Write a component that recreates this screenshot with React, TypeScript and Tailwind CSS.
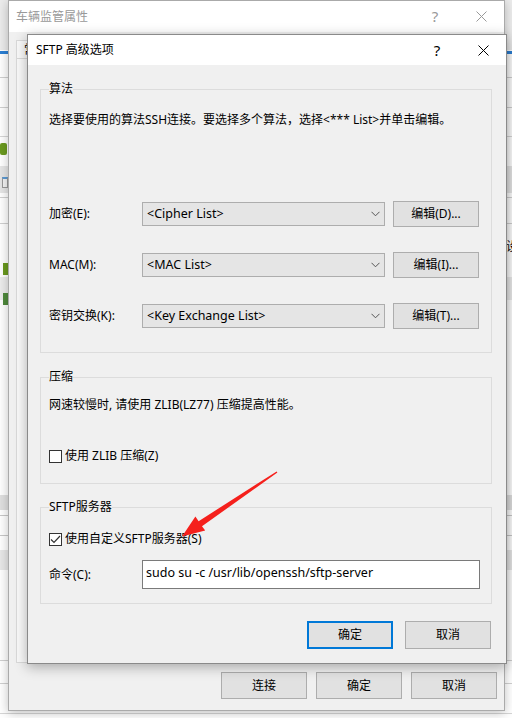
import type { ReactNode } from "react";

function CloseGlyph({ color }: { color: string }) {
  return (
    <svg width="11" height="11" viewBox="0 0 11 11">
      <path d="M0.5 0.5 L10.5 10.5 M10.5 0.5 L0.5 10.5" stroke={color} strokeWidth="1" fill="none" />
    </svg>
  );
}

function Chevron() {
  return (
    <svg width="9" height="6" viewBox="0 0 9 6">
      <path d="M0.5 0.8 L4.5 4.8 L8.5 0.8" stroke="#555" strokeWidth="1" fill="none" />
    </svg>
  );
}

function TitleButtons({ color }: { color: string }) {
  return (
    <div className="flex h-full">
      <div className="flex w-[46px] items-center justify-center text-[15px]" style={{ color }}>
        ?
      </div>
      <div className="flex w-[46px] items-center justify-center">
        <CloseGlyph color={color} />
      </div>
    </div>
  );
}

function WinButton({ children, primary, className = "" }: { children: ReactNode; primary?: boolean; className?: string }) {
  return (
    <button
      className={
        "flex w-[86px] items-center justify-center bg-[#e1e1e1] text-[12px] text-black " +
        (primary ? "border-2 border-[#0078d7] " : "border border-[#adadad] ") +
        className
      }
    >
      {children}
    </button>
  );
}

function Combo({ value }: { value: string }) {
  return (
    <div className="flex h-[24px] w-[243px] items-center justify-between border border-[#adadad] bg-[#e5e5e5] pl-[4px] pr-[4px] text-[12.5px]">
      <span>{value}</span>
      <Chevron />
    </div>
  );
}

function Checkbox({ checked }: { checked?: boolean }) {
  return (
    <span className="flex h-[13px] w-[13px] items-center justify-center border border-[#333] bg-white">
      {checked && (
        <svg width="11" height="11" viewBox="0 0 11 11">
          <path d="M1 5.5 L4 8.5 L10 2" stroke="#333" strokeWidth="1.2" fill="none" />
        </svg>
      )}
    </span>
  );
}

function Group({ title, height, children }: { title: string; height: string; children: ReactNode }) {
  return (
    <fieldset className={"w-[452px] border border-[#dcdcdc] px-[8px] " + height}>
      <legend className="px-0 leading-[16px]">{title}</legend>
      {children}
    </fieldset>
  );
}

const algos = [
  { label: "加密(E):", value: "<Cipher List>", button: "编辑(D)..." },
  { label: "MAC(M):", value: "<MAC List>", button: "编辑(I)..." },
  { label: "密钥交换(K):", value: "<Key Exchange List>", button: "编辑(T)..." },
];

// strips of the app window that shows behind both dialogs
const backdrop = [
  { top: 0, h: 50, cls: "bg-[#ececec]" },
  { top: 51, h: 3, cls: "bg-[#2b7fd4]" },
  { top: 77, h: 1, cls: "bg-[#d0d0d0]" },
  { top: 107, h: 1, cls: "bg-[#d0d0d0]" },
  { top: 136, h: 1, cls: "bg-[#d6d6d6]" },
  { top: 166, h: 27, cls: "bg-[#e6e6e6]" },
  { top: 197, h: 1, cls: "bg-[#d0d0d0]" },
  { top: 223, h: 1, cls: "bg-[#d0d0d0]" },
  { top: 277, h: 23, cls: "bg-[#ececec]" },
  { top: 495, h: 15, cls: "bg-[#e0e0e0]" },
  { top: 515, h: 1, cls: "bg-[#c8c8c8]" },
  { top: 535, h: 1, cls: "bg-[#c8c8c8]" },
  { top: 550, h: 20, cls: "bg-[#e8e8e8]" },
  { top: 660, h: 1, cls: "bg-[#d0d0d0]" },
  { top: 683, h: 1, cls: "bg-[#d0d0d0]" },
  { top: 713, h: 1, cls: "bg-[#d6d6d6]" },
];

export default function App() {
  return (
    <div className="relative h-[718px] w-[512px] overflow-hidden bg-white font-['Noto_Sans','Noto_Sans_CJK_SC',sans-serif] text-[12px] text-black">
      {backdrop.map((s) => (
        <div key={s.top} className={"absolute left-0 w-full " + s.cls} style={{ top: s.top, height: s.h }} />
      ))}
      <div className="absolute left-0 top-[143px] h-[12px] w-[7px] rounded-[2px] bg-[#6a9a1f]" />
      <div className="absolute left-[2px] top-[177px] h-[11px] w-[6px] border border-[#999] border-t-2 border-t-[#5b9bd5] bg-[#f4f4f4]" />
      <div className="absolute left-[12px] top-[201px] text-[12px] leading-[16px]">户</div>
      <div className="absolute left-[3px] top-[263px] h-[12px] w-[5px] bg-[#6a9a1f]" />
      <div className="absolute left-[3px] top-[293px] h-[12px] w-[5px] bg-[#4f8a3c]" />
      <div className="absolute left-[506px] top-[239px] text-[12px] leading-[16px]">设</div>

      {/* parent dialog */}
      <div className="absolute left-[8px] top-0 flex h-[711px] w-[497px] flex-col border border-[#aaaaaa] bg-[#f0f0f0] shadow-[0_2px_10px_rgba(0,0,0,0.25)]">
        <div className="flex h-[31px] shrink-0 items-center justify-between bg-white pl-[7px]">
          <span className="text-[#999]">车辆监管属性</span>
          <TitleButtons color="#999" />
        </div>
        <div className="flex flex-1 flex-col px-[7px] pt-[8px]">
          <div className="flex h-[18px] w-[11px] items-center overflow-hidden whitespace-nowrap border border-b-0 border-r-0 border-[#d9d9d9] bg-[#f9f9f9] pl-[7px] leading-[16px]">
            常规
          </div>
          <div className="h-[605px] w-full border border-[#d9d9d9] bg-[#f9f9f9]" />
          <div className="mt-[9px] flex justify-end gap-[9px]">
            <WinButton className="h-[27px]">连接</WinButton>
            <WinButton className="h-[27px]">确定</WinButton>
            <WinButton className="h-[27px]">取消</WinButton>
          </div>
        </div>
      </div>

      {/* SFTP dialog */}
      <div className="absolute left-[27px] top-[34px] flex h-[630px] w-[480px] flex-col border border-[#8a8a8a] bg-[#f0f0f0] shadow-[0_3px_12px_rgba(0,0,0,0.3)]">
        <div className="flex h-[30px] shrink-0 items-center justify-between bg-white pl-[8px]">
          <span>SFTP 高级选项</span>
          <TitleButtons color="#000" />
        </div>
        <div className="flex flex-col pl-[12px] pt-[16px]">
          <Group title="算法" height="h-[272px]">
            <p className="mt-[15px] leading-[16px]">
              选择要使用的算法SSH连接。要选择多个算法，选择&lt;*** List&gt;并单击编辑。
            </p>
            <div className="mt-[73px] flex flex-col gap-[25px]">
              {algos.map((a) => (
                <div key={a.label} className="flex h-[26px] items-center">
                  <span className="w-[93px]">{a.label}</span>
                  <Combo value={a.value} />
                  <WinButton className="ml-[8px] h-[26px]">{a.button}</WinButton>
                </div>
              ))}
            </div>
          </Group>

          <div className="mt-[16px]">
            <Group title="压缩" height="h-[115px]">
              <p className="mt-[12px] leading-[16px]">网速较慢时, 请使用 ZLIB(LZ77) 压缩提高性能。</p>
              <label className="mt-[35px] flex h-[16px] items-center gap-[3px]">
                <Checkbox />
                <span>使用 ZLIB 压缩(Z)</span>
              </label>
            </Group>
          </div>

          <div className="mt-[15px]">
            <Group title="SFTP服务器" height="h-[105px]">
              <label className="mt-[16px] flex h-[16px] items-center gap-[3px]">
                <Checkbox checked />
                <span>使用自定义SFTP服务器(S)</span>
              </label>
              <div className="mt-[13px] flex h-[29px] items-center">
                <span className="w-[93px]">命令(C):</span>
                <div className="flex h-[29px] w-[338px] items-center border border-[#7a7a7a] bg-white pb-[3px] pl-[3px] text-[12.5px]">
                  sudo su -c /usr/lib/openssh/sftp-server
                </div>
              </div>
            </Group>
          </div>

          <div className="mt-[17px] flex w-[452px] justify-end gap-[12px] pr-[1px]">
            <WinButton primary className="h-[28px]">确定</WinButton>
            <WinButton className="h-[28px]">取消</WinButton>
          </div>
        </div>
      </div>

      {/* annotation arrow */}
      <svg className="pointer-events-none absolute left-0 top-0" width="512" height="718" viewBox="0 0 512 718">
        <polygon
          points="276.6,471.4 198.6,521.2 195.4,516.6 182,536.5 205.2,530.6 202,526.2 277.4,472.6"
          fill="#f5201c"
        />
      </svg>
    </div>
  );
}
